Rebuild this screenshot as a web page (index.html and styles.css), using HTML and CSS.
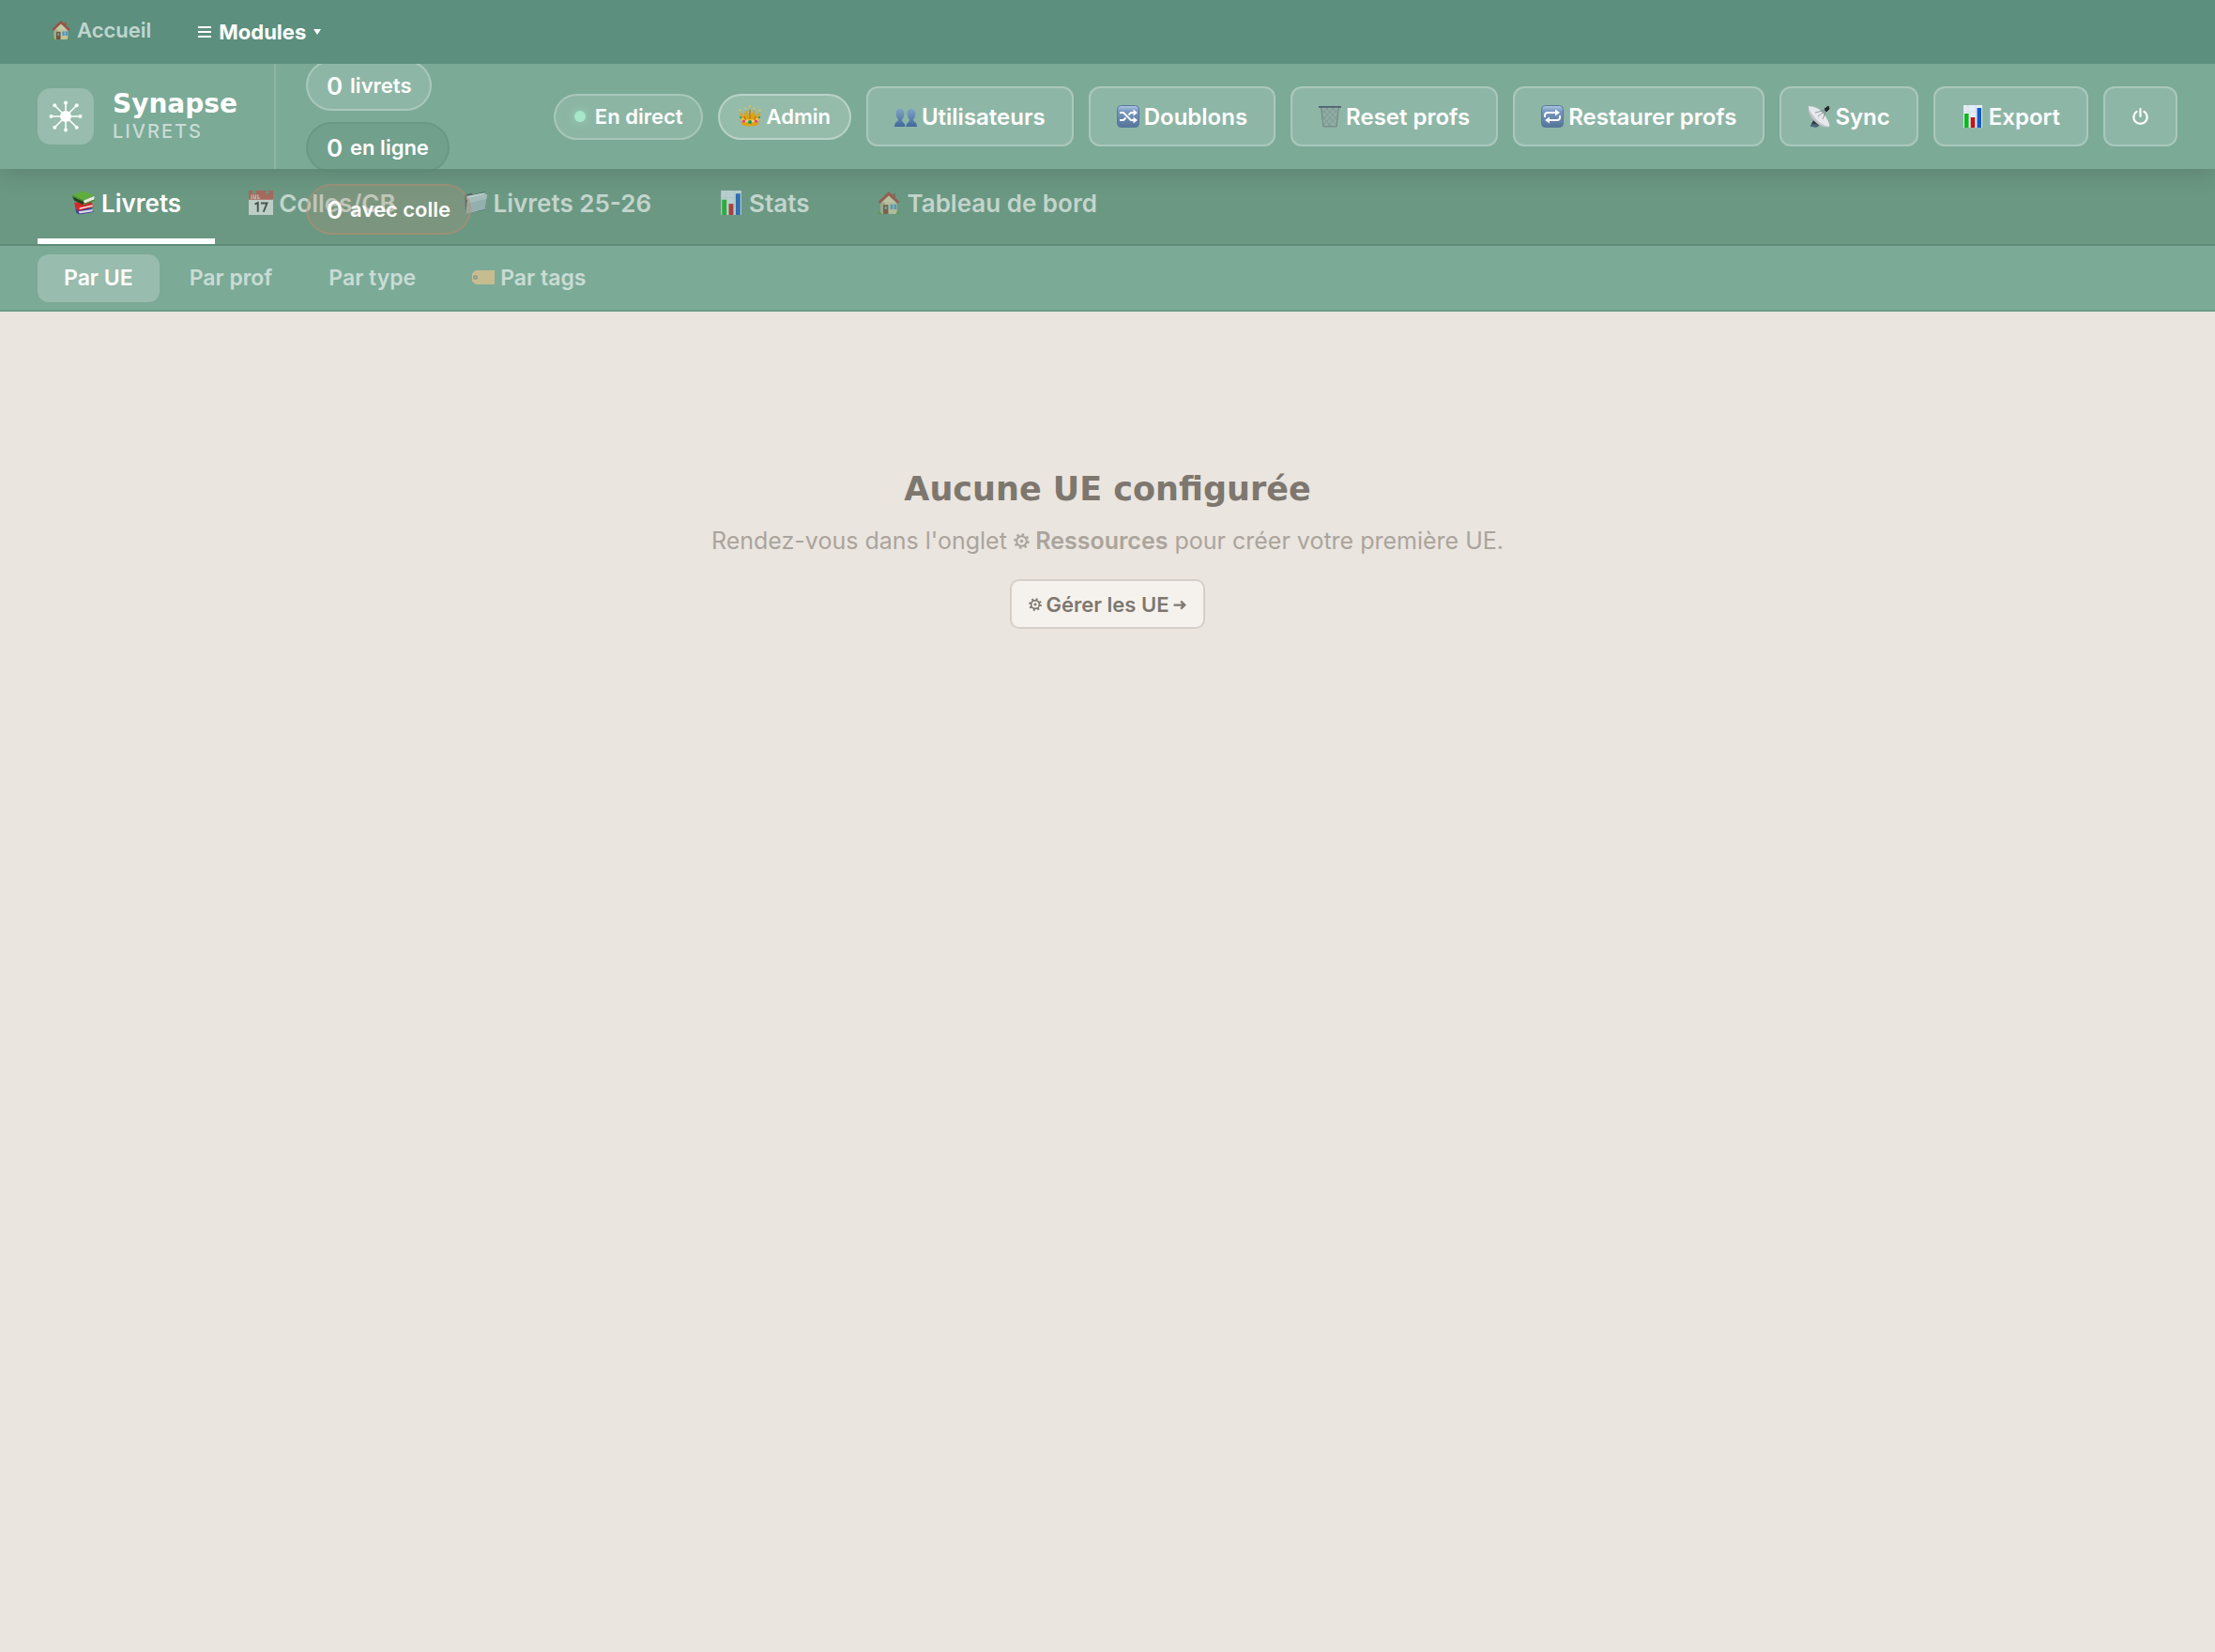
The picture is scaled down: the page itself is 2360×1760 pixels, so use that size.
FILE: index.html
```html
<!DOCTYPE html>
<html lang="fr">
<head>
    <meta charset="utf-8">
    <title>Synapse - Livrets</title>
    <meta name="viewport" content="width=device-width, initial-scale=1.0">
    <link rel="stylesheet" href="styles.css">
</head>
<body>
<!-- shared icons -->
<svg class="sprite" aria-hidden="true">
    <symbol id="i-house" viewBox="0 0 24 24">
        <path d="M4 11h16v12H4z" fill="#d8cfa6"/>
        <path d="M4 11h4v12H4z" fill="#b9b08a"/>
        <path d="M16 3h2.500v4H16z" fill="#8d5a48"/>
        <path d="M12 1 L1.500 11 L3.500 13 L12 5 L20.500 13 L22.500 11z" fill="#a8453a"/>
        <path d="M12 5 L5 11.500h14z" fill="#e2d9b2"/>
        <path d="M6.500 14h5v9h-5z" fill="#75492c"/>
        <path d="M8 15.500h2v3H8z" fill="#6aa9cf"/>
        <path d="M13.500 13.500h6v5h-6z" fill="#4d98c9"/>
        <path d="M16.500 13.500v5" stroke="#dfe8e4" stroke-width=".8"/>
        <path d="M1 23c0-3 3-3 4 0zM19 23c1-3 4-3 4 0z" fill="#5c9a3c"/>
    </symbol>
    <symbol id="i-books" viewBox="0 0 24 24">
        <path d="M4 18 L20 17 L22 21 L8 23.500 L5 22z" fill="#3b3f97"/>
        <path d="M7 20.500 L21 18.500 V20.500 L8 22.500z" fill="#dcdae8"/>
        <path d="M3 12 L19 10 L22 16 L7 20 L4 17z" fill="#d3262b"/>
        <path d="M8 17 L21 14 V15.500 L8 18.500z" fill="#f3eeee"/>
        <path d="M1 6 L3 10 L12 14 L12 10z" fill="#26401f"/>
        <path d="M1 4.500 L11 .5 L23 4.500 L12 9.500z" fill="#5fae3c"/>
        <path d="M12 10 L22.500 5.500 V9 L13 13z" fill="#e9ebe2"/>
        <path d="M1 4.500 L12 9.500 V11 L2 6.500z" fill="#3f8f2c"/>
        <path d="M12 13 L23 8.500 V10 L12 14.500z" fill="#3f8f2c"/>
    </symbol>
    <symbol id="i-calendar" viewBox="0 0 24 24">
        <path d="M0 0h24v24H0z" fill="#e9ebea"/>
        <path d="M0 0h24v9H0z" fill="#c4504b"/>
        <circle cx="5.500" cy="1.800" r="1.700" fill="#6b9883"/>
        <circle cx="18.500" cy="1.800" r="1.700" fill="#6b9883"/>
        <path d="M3 4v3.500H2M5 4v3.500h2V4M9 4v3.500h2" fill="none" stroke="#f0d9d6"/>
        <path d="M6 13.500 L9 12v9M12 12.500h6 L14.500 21" fill="none" stroke="#333" stroke-width="1.800"/>
    </symbol>
    <symbol id="i-folder" viewBox="0 0 24 24">
        <path d="M1 4 L8 2.500 L9 4 L21 1 V19 L2 23z" fill="#3f5563"/>
        <path d="M3 5.500 L21 2 V5 L3 9z" fill="#e6ecec"/>
        <path d="M4 7.500 L23 3.500 L21 18.500 L2 23z" fill="#a9bcc6"/>
        <path d="M4 7.500 L23 3.500 L22.500 8 L3.500 13z" fill="#c3d0d5"/>
    </symbol>
    <symbol id="i-chart" viewBox="0 0 24 24">
        <path d="M2 0h20v24H2z" fill="#e3edf5"/>
        <path d="M7 0v24M15 0v24M2 7h20" stroke="#c6d8e5" stroke-width=".6"/>
        <path d="M3 9h4.500v15H3z" fill="#09b91a"/>
        <path d="M9.700 13h4.500v11H9.700z" fill="#c51416"/>
        <path d="M16.500 3h4.500v21h-4.500z" fill="#1559c8"/>
    </symbol>
    <symbol id="i-tag" viewBox="0 0 24 24">
        <path d="M0 7.500 L3.500 4H24v15H3.500L0 15.500z" fill="#e6c48c"/>
        <circle cx="3.500" cy="11.500" r="2.300" fill="#7e8b80"/>
        <circle cx="3.500" cy="11.500" r="1" fill="#c9c2a0"/>
    </symbol>
    <symbol id="i-crown" viewBox="0 0 24 24">
        <path d="M1 6 L5.500 12 L7.500 4 L10.500 11 L12 2 L13.500 11 L16.500 4 L18.500 12 L23 6 L21 21Q12 24 3 21z" fill="#dda21b"/>
        <path d="M3 14Q12 17 21 14L20.700 17Q12 20 3.300 17z" fill="#f5ce4a"/>
        <path d="M6 12l1.500 4M12 5v10M18 12l-1.500 4" fill="none" stroke="#a86d12"/>
        <circle cx="1.300" cy="5.500" r="1" fill="#f0c64a"/>
        <circle cx="7.500" cy="3.500" r="1" fill="#f0c64a"/>
        <circle cx="12" cy="1.500" r="1" fill="#f0c64a"/>
        <circle cx="16.500" cy="3.500" r="1" fill="#f0c64a"/>
        <circle cx="22.700" cy="5.500" r="1" fill="#f0c64a"/>
        <circle cx="5.500" cy="17" r="1.600" fill="#d936b5"/>
        <circle cx="12" cy="18" r="2" fill="#0b9a72"/>
        <circle cx="18.500" cy="17" r="1.600" fill="#d936b5"/>
        <circle cx="2" cy="13" r="1" fill="#0b9a72"/>
        <circle cx="22" cy="13" r="1" fill="#0b9a72"/>
    </symbol>
    <symbol id="i-users" viewBox="0 0 24 24">
        <linearGradient id="g-users" x1="0" y1="0" x2="0" y2="1">
            <stop offset="0" stop-color="#7ea4c6"/>
            <stop offset="1" stop-color="#41689b"/>
        </linearGradient>
        <path d="M6 4c-3 0-4.500 2-4.300 5 .1 3 1 5 2.300 6.500C4 18 0 17 0 23h11.500c0-5-3.500-4-3.500-7.500C9.500 14 10.300 12 10.400 9 10.500 6 9 4 6 4z" fill="url(#g-users)"/>
        <path d="M18 4c-3 0-4.500 2-4.300 5 .1 3 1 5 2.300 6.500C16 19 12.500 18 12.500 23H24c0-6-4-5-4-7.500C21.500 14 22.300 12 22.400 9 22.500 6 21 4 18 4z" fill="url(#g-users)"/>
    </symbol>
    <symbol id="i-shuffle" viewBox="0 0 24 24">
        <linearGradient id="g-key" x1="0" y1="0" x2="0" y2="1">
            <stop offset="0" stop-color="#b3cbe6"/>
            <stop offset=".25" stop-color="#7899c0"/>
            <stop offset="1" stop-color="#547397"/>
        </linearGradient>
        <rect x=".5" y=".5" width="23" height="23" rx="4" fill="url(#g-key)" stroke="#58779c"/>
        <path d="M3 8h4l8 8h4M3 16h4l2.500-2.500M12.500 10.500 15 8h4" fill="none" stroke="#fff" stroke-width="2"/>
        <path d="M17.500 4.500 22 8l-4.500 3.500zM17.500 12.500 22 16l-4.500 3.500z" fill="#fff"/>
    </symbol>
    <symbol id="i-repeat" viewBox="0 0 24 24">
        <rect x=".5" y=".5" width="23" height="23" rx="4" fill="url(#g-key)" stroke="#58779c"/>
        <path d="M4 13v-2q0-3 3-3h9M20 11v2q0 3-3 3H8" fill="none" stroke="#fff" stroke-width="2"/>
        <path d="M15 4.500 20 8l-5 3.500zM9 12.500 4 16l5 3.500z" fill="#fff"/>
    </symbol>
    <symbol id="i-trash" viewBox="0 0 24 24">
        <path d="M2.500 2h19L19 23H5z" fill="#8fada3"/>
        <path d="M4 5l15 16M8 3l12 13M14 3l6 6M3.500 11l10 12M20 5 5 21M16 3 4 16M10 3 3.500 9M20 11 9 23" stroke="#748c88" stroke-width=".6"/>
        <path d="M2.500 2 L5 23M21.500 2 L19 23M5 22.800h14" stroke="#71827f"/>
        <path d="M0 1h24v1.800H0z" fill="#4f6273"/>
    </symbol>
    <symbol id="i-dish" viewBox="0 0 24 24">
        <path d="M4 20 8 13l4 9q-4 3-8 0z" fill="#2d3b45"/>
        <path d="M3 21q4-2 8 0v2H3z" fill="#4b6879"/>
        <path d="M1 1 Q-1 8 7 17 Q15 25 23 23z" fill="#bfc4c9"/>
        <path d="M1 1 Q12 1 19 12 Q24 20 23 23 Q15 22 8 14 Q1 6 1 1z" fill="#e6e8eb"/>
        <path d="M11 12 L20 5M8 8l12-3M16 15l4-10" stroke="#767d84" stroke-width=".7"/>
        <path d="M18 4 22 1 23 4 20 7z" fill="#262a2e" stroke="#262a2e"/>
    </symbol>
    <symbol id="i-power" viewBox="0 0 24 24">
        <path d="M7 5.500a9 9 0 1 0 10 0M12 2v10" fill="none" stroke="currentColor" stroke-width="2.800" stroke-linecap="round"/>
    </symbol>
    <symbol id="i-gear" viewBox="0 0 24 24">
        <circle cx="12" cy="12" r="7.500" fill="none" stroke="currentColor" stroke-width="2.800"/>
        <circle cx="12" cy="12" r="10" fill="none" stroke="currentColor" stroke-width="3.600" stroke-dasharray="3.400 4.454"/>
        <circle cx="12" cy="12" r="2.500" fill="currentColor"/>
    </symbol>
    <symbol id="i-arrow" viewBox="0 0 24 24">
        <path d="M1 13h19M14 6l7 7-7 7" fill="none" stroke="currentColor" stroke-width="4"/>
    </symbol>
</svg>

<nav class="topbar">
    <a href="#" class="top-link"><svg class="ico ico-22 dim"><use href="#i-house"/></svg>Accueil</a>
    <button type="button" class="modules-btn">
        <svg class="burger" viewBox="0 0 14 14"><path d="M0 2h14M0 7h14M0 12h14" stroke="currentColor" stroke-width="2"/></svg>
        Modules
        <svg class="caret" viewBox="0 0 8 8"><path d="M0 1h8L4 7z" fill="currentColor"/></svg>
    </button>
</nav>

<header class="header">
    <div class="brand">
        <div class="logo">
            <svg viewBox="0 0 36 36">
                <g stroke="#fff" stroke-width="1.600">
                    <path d="M18 3v30M2 18h32M6 6l24 24M30 6 6 30"/>
                </g>
                <g fill="#fff">
                    <circle cx="18" cy="18" r="6"/>
                    <circle cx="18" cy="3.500" r="2"/><circle cx="18" cy="32.500" r="2"/>
                    <circle cx="2.500" cy="18" r="2"/><circle cx="33.500" cy="18" r="2"/>
                    <circle cx="6.300" cy="6.300" r="2"/><circle cx="29.700" cy="6.300" r="2"/>
                    <circle cx="6.300" cy="29.700" r="2"/><circle cx="29.700" cy="29.700" r="2"/>
                </g>
            </svg>
        </div>
        <div>
            <div class="brand-name">Synapse</div>
            <div class="brand-sub">LIVRETS</div>
        </div>
    </div>
    <div class="stats">
        <div class="stat"><b>0</b>livrets</div>
        <div class="stat stat-online"><b>0</b>en ligne</div>
        <div class="stat stat-colle"><b>0</b>avec colle</div>
    </div>
    <div class="actions">
        <div class="pill"><span class="dot"></span>En direct</div>
        <div class="pill pill-admin"><svg class="ico ico-24"><use href="#i-crown"/></svg>Admin</div>
        <button type="button" class="btn"><svg class="ico ico-24"><use href="#i-users"/></svg>Utilisateurs</button>
        <button type="button" class="btn"><svg class="ico ico-24"><use href="#i-shuffle"/></svg>Doublons</button>
        <button type="button" class="btn"><svg class="ico ico-24"><use href="#i-trash"/></svg>Reset profs</button>
        <button type="button" class="btn"><svg class="ico ico-24"><use href="#i-repeat"/></svg>Restaurer profs</button>
        <button type="button" class="btn"><svg class="ico ico-24"><use href="#i-dish"/></svg>Sync</button>
        <button type="button" class="btn"><svg class="ico ico-24"><use href="#i-chart"/></svg>Export</button>
        <button type="button" class="btn" aria-label="Déconnexion"><svg class="power"><use href="#i-power"/></svg></button>
    </div>
</header>

<nav class="tabs">
    <button type="button" class="tab active"><svg class="ico ico-26"><use href="#i-books"/></svg>Livrets</button>
    <button type="button" class="tab"><svg class="ico ico-26"><use href="#i-calendar"/></svg>Colles/CB</button>
    <button type="button" class="tab"><svg class="ico ico-26"><use href="#i-folder"/></svg>Livrets 25-26</button>
    <button type="button" class="tab"><svg class="ico ico-26"><use href="#i-chart"/></svg>Stats</button>
    <button type="button" class="tab"><svg class="ico ico-26"><use href="#i-house"/></svg>Tableau de bord</button>
</nav>

<nav class="subtabs">
    <button type="button" class="subtab active">Par UE</button>
    <button type="button" class="subtab">Par prof</button>
    <button type="button" class="subtab">Par type</button>
    <button type="button" class="subtab"><svg class="ico ico-24"><use href="#i-tag"/></svg>Par tags</button>
</nav>

<main class="empty">
    <h1>Aucune UE configurée</h1>
    <p>Rendez-vous dans l'onglet <strong><svg class="gear"><use href="#i-gear"/></svg> Ressources</strong> pour créer votre première UE.</p>
    <button type="button" class="manage-btn"><svg class="gear gear-sm"><use href="#i-gear"/></svg>Gérer les UE<svg class="arrow"><use href="#i-arrow"/></svg></button>
</main>
</body>
</html>
```
FILE: styles.css
```css
* { box-sizing: border-box; }
body { margin: 0; min-height: 100vh; font-family: Inter, "Liberation Sans", sans-serif; font-size: 24px; background: #eae5df; color: #7d776f; }
button { font: inherit; color: inherit; background: none; border: none; margin: 0; cursor: pointer; }
.sprite { position: absolute; width: 0; height: 0; }
.ico { flex: none; display: block; }
.ico-22 { width: 22px; height: 22px; }
.ico-24 { width: 24px; height: 24px; }
.ico-26 { width: 26px; height: 26px; }
.dim { opacity: .8; }

/* top bar */
.topbar { position: relative; z-index: 3; display: flex; align-items: center; gap: 30px; height: 68px; padding: 0 54px; background: #5c8f7d; }
.top-link { display: flex; align-items: center; gap: 6px; padding-bottom: 4px; font-size: 22px; font-weight: 600; color: rgba(255,255,255,.65); text-decoration: none; }
.modules-btn { display: flex; align-items: center; gap: 8px; padding: 0 20px; font-size: 22px; font-weight: 700; color: #fff; }
.burger { width: 14px; height: 14px; }
.caret { width: 8px; height: 8px; }

/* header */
.header { position: relative; z-index: 2; display: flex; align-items: center; height: 112px; padding: 0 40px; background: #7baa97; color: #fff; box-shadow: 0 4px 24px rgba(0,0,0,.15); }
.brand { display: flex; align-items: center; gap: 20px; align-self: stretch; padding-right: 39px; border-right: 2px solid rgba(255,255,255,.15); }
.logo { display: flex; align-items: center; justify-content: center; width: 60px; height: 60px; border-radius: 14px; background: rgba(255,255,255,.22); }
.logo svg { width: 36px; height: 36px; }
.brand-name { font-family: "DejaVu Sans", sans-serif; font-size: 28px; font-weight: 700; line-height: 32px; }
.brand-sub { font-size: 20px; font-weight: 500; line-height: 26px; letter-spacing: 2px; color: rgba(255,255,255,.6); }
.stats { display: flex; flex-direction: column; align-items: flex-start; gap: 12px; padding: 66px 0 0 32px; }
.stat { display: flex; align-items: center; gap: 8px; height: 54px; padding: 0 20px; border: 2px solid rgba(255,255,255,.25); border-radius: 27px; background: rgba(255,255,255,.15); font-size: 22px; font-weight: 600; white-space: nowrap; }
.stat b { font-size: 26px; font-weight: 600; }
.stat-online { background: rgba(90,140,115,.3); border-color: rgba(90,140,115,.35); }
.stat-colle { background: rgba(190,140,110,.2); border-color: rgba(190,140,110,.45); }
.actions { display: flex; align-items: center; gap: 16px; margin-left: auto; white-space: nowrap; }
.pill { display: flex; align-items: center; gap: 10px; height: 49px; padding: 0 20px; border: 2px solid rgba(255,255,255,.25); border-radius: 25px; background: rgba(255,255,255,.13); font-size: 22px; font-weight: 600; }
.pill-admin { gap: 5px; border-color: rgba(255,255,255,.35); background: rgba(255,255,255,.2); }
.dot { width: 12px; height: 12px; border-radius: 50%; background: #a6e8c9; box-shadow: 0 0 12px rgba(166,232,201,.7); }
.btn { display: flex; align-items: center; gap: 5px; height: 64px; padding: 0 28px; border: 2px solid rgba(255,255,255,.25); border-radius: 12px; background: rgba(255,255,255,.15); font-weight: 600; }
.power { width: 19px; height: 20px; }

/* main tabs */
.tabs { display: flex; height: 82px; padding: 0 40px; background: #6b9883; border-bottom: 2px solid #5f8c78; }
.tab { display: flex; align-items: center; gap: 6px; padding: 0 36px 2px; border-bottom: 6px solid transparent; font-size: 26px; font-weight: 600; color: rgba(255,255,255,.6); }
.tab .ico { opacity: .65; }
.tab.active { color: #fff; border-bottom-color: #fff; }
.tab.active .ico { opacity: 1; }

/* sub tabs */
.subtabs { display: flex; align-items: center; gap: 4px; height: 70px; padding: 0 40px; background: #7baa97; border-bottom: 2px solid #6b9b88; }
.subtab { display: flex; align-items: center; gap: 6px; height: 51px; padding: 0 28px; border-radius: 12px; font-size: 23px; font-weight: 600; color: rgba(255,255,255,.6); }
.subtab .ico { opacity: .7; }
.subtab.active { background: rgba(255,255,255,.22); color: #fff; }

/* empty state */
.empty { display: flex; flex-direction: column; align-items: center; padding: 169px 40px; text-align: center; }
.empty h1 { margin: 0 0 17px; font-family: "DejaVu Sans", sans-serif; font-size: 35px; font-weight: 700; line-height: 40px; }
.empty p { margin: 0 0 23px; font-size: 25px; line-height: 36px; color: #aaa49c; }
.empty strong { font-weight: 600; }
.gear { width: 17px; height: 17px; }
.gear-sm { width: 14px; height: 14px; }
.arrow { width: 14px; height: 14px; }
.manage-btn { display: flex; align-items: center; gap: 5px; height: 53px; padding: 0 18px; border: 2px solid #d5cfc8; border-radius: 10px; background: #f5f2ed; font-size: 22px; font-weight: 600; }
```
